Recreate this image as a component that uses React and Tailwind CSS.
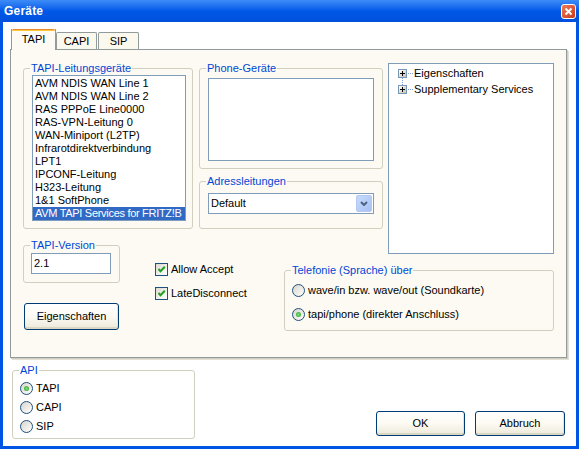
import React from 'react'

const listItems = [
  'AVM NDIS WAN Line 1',
  'AVM NDIS WAN Line 2',
  'RAS PPPoE Line0000',
  'RAS-VPN-Leitung 0',
  'WAN-Miniport (L2TP)',
  'Infrarotdirektverbindung',
  'LPT1',
  'IPCONF-Leitung',
  'H323-Leitung',
  '1&1 SoftPhone',
  'AVM TAPI Services for FRITZ!B',
]

function Group({ label, className = '', legendClass = 'ml-[-1px]', children }) {
  return (
    <fieldset className={`border border-[#D0D0BF] rounded-[3px] ${className}`}>
      <legend className={`px-[1px] leading-[13px] text-[#0046D5] ${legendClass}`}>{label}</legend>
      {children}
    </fieldset>
  )
}

function Radio({ checked, label }) {
  return (
    <div className="flex items-center h-[13px] gap-[3px] leading-[13px]">
      <span className="w-[13px] h-[13px] shrink-0 rounded-full border border-[#1C5180] bg-linear-to-br from-[#D8D5CA] to-white flex items-center justify-center">
        {checked && (
          <span className="w-[5px] h-[5px] rounded-full bg-radial from-[#7CE07A] to-[#1F9E1F]" />
        )}
      </span>
      <span>{label}</span>
    </div>
  )
}

function Check({ label }) {
  return (
    <div className="flex items-center h-[13px] gap-[3px] leading-[13px]">
      <span className="w-[13px] h-[13px] shrink-0 border border-[#1C5180] bg-linear-to-br from-[#DCDAD0] to-white flex items-center justify-center">
        <svg width="9" height="9" viewBox="0 0 9 9">
          <path d="M1.5 4 L3.5 6.2 L7.8 1.8" fill="none" stroke="#21A121" strokeWidth="2" />
        </svg>
      </span>
      <span>{label}</span>
    </div>
  )
}

function XPButton({ children, className = '' }) {
  return (
    <button className={`border border-[#003C74] rounded-[3px] bg-linear-to-b from-white via-[#FCFAF2] to-[#ECE8DA] shadow-[inset_0_-2px_0_#DCD6C4,inset_-1px_0_0_#E6E2D4] text-black leading-none ${className}`}>
      {children}
    </button>
  )
}

function PlusBox() {
  return (
    <span className="w-[9px] h-[9px] shrink-0 border border-[#7898B5] bg-linear-to-br from-white to-[#C6C2B2] flex items-center justify-center">
      <svg width="7" height="7" viewBox="0 0 7 7" shapeRendering="crispEdges">
        <path d="M1 3.5h5M3.5 1v5" stroke="#000" strokeWidth="1" />
      </svg>
    </span>
  )
}

export default function App() {
  return (
    <div className="w-[579px] h-[449px] bg-[#0055E5] flex flex-col font-['Liberation_Sans',Arial,sans-serif] text-[11px] text-black overflow-hidden">
      {/* title bar */}
      <div className="h-[22px] shrink-0 flex items-center pl-[4px] pr-[3px] bg-linear-to-b from-[#3D8CF7] via-[#0058E8] to-[#0050DC]">
        <span className="text-white font-bold text-[12px] tracking-[0.2px]">Geräte</span>
        <div className="ml-auto w-[15px] h-[15px] rounded-[3px] border border-white bg-linear-to-br from-[#F07A55] to-[#C8391A] flex items-center justify-center">
          <svg width="9" height="9" viewBox="0 0 9 9">
            <path d="M1.5 1.5 L7.5 7.5 M7.5 1.5 L1.5 7.5" stroke="#fff" strokeWidth="2" />
          </svg>
        </div>
      </div>

      {/* client */}
      <div className="flex-1 mx-[3px] mb-[3px] bg-white flex flex-col pl-[7px] pt-[7px]">
        {/* tabs */}
        <div className="relative z-10 flex items-end h-[21px] mb-[-1px] ml-[1px]">
          <div className="w-[45px] h-[21px] bg-[#FCFAF2] border-x border-[#919B9C] flex flex-col">
            <div className="h-[3px] bg-[#FFC83C] border-t border-[#E68B2C] rounded-t-[2px]" />
            <div className="flex-1 flex items-center justify-center pb-[3px]">TAPI</div>
          </div>
          <div className="w-[41px] h-[17px] mb-[1px] bg-[#FBF8EE] border border-b-0 border-[#919B9C] rounded-t-[2px] flex items-center justify-center">CAPI</div>
          <div className="w-[41px] h-[17px] mb-[1px] ml-[1px] bg-[#FBF8EE] border border-b-0 border-[#919B9C] rounded-t-[2px] flex items-center justify-center">SIP</div>
        </div>

        {/* tab panel */}
        <div className="w-[557px] h-[309px] shrink-0 bg-[#FCFAF2] border border-[#919B9C] shadow-[1px_1px_0_#D0CEBF,2px_2px_0_#E3E1D6] pl-[12px] pt-[12px]">
          <div className="grid grid-cols-[176px_85px_104px_166px] grid-rows-[167px_25px_77px]">
            {/* TAPI-Leitungsgeräte */}
            <Group label="TAPI-Leitungsgeräte" legendClass="ml-[-2px]" className="col-start-1 row-start-1 w-[170px] h-[167px] pl-[8px]">
              <div className="w-[154px] h-[146px] bg-white border border-[#7F9DB9] pt-[1px] overflow-hidden">
                {listItems.map((item, i) => (
                  <div
                    key={item}
                    className={`h-[13px] leading-[13px] pl-[2px] whitespace-nowrap overflow-hidden ${i === listItems.length - 1 ? 'bg-[#316AC5] text-white tracking-[-0.3px]' : ''}`}
                  >
                    {item}
                  </div>
                ))}
              </div>
            </Group>

            {/* Phone-Geräte + Adressleitungen */}
            <div className="col-start-2 col-span-2 row-start-1 flex flex-col">
              <Group label="Phone-Geräte" legendClass="ml-[-2px]" className="w-[184px] h-[107px] pl-[8px]">
                <div className="mt-[3px] w-[166px] h-[83px] bg-white border border-[#7F9DB9]" />
              </Group>
              <Group label="Adressleitungen" legendClass="ml-[-2px]" className="mt-[6px] w-[184px] h-[54px] pl-[8px]">
                <div className="mt-[5px] w-[166px] h-[21px] bg-white border border-[#7F9DB9] flex items-center pl-[2px] pr-[1px]">
                  <span className="leading-[13px]">Default</span>
                  <span className="ml-auto w-[16px] h-[17px] rounded-[2px] bg-linear-to-br from-[#C7DAFB] to-[#A6C2F3] border border-[#B4C8F0] flex items-center justify-center">
                    <svg width="8" height="5" viewBox="0 0 8 5">
                      <path d="M1 1 L4 4 L7 1" fill="none" stroke="#4D6185" strokeWidth="2" />
                    </svg>
                  </span>
                </div>
              </Group>
            </div>

            {/* tree */}
            <div className="col-start-4 row-start-1 row-span-2 mt-[1px] w-[166px] h-[191px] bg-white border border-[#7F9DB9] pt-[1px] pl-[9px]">
              <div className="relative h-[16px] flex items-center">
                <PlusBox />
                <span className="w-[5px] border-t border-dotted border-[#7C9FD3] mx-[1px]" />
                <span className="leading-[13px]">Eigenschaften</span>
                <span className="absolute left-[4px] top-[12px] h-[8px] border-l border-dotted border-[#7C9FD3]" />
              </div>
              <div className="h-[16px] flex items-center">
                <PlusBox />
                <span className="w-[5px] border-t border-dotted border-[#7C9FD3] mx-[1px]" />
                <span className="leading-[13px]">Supplementary Services</span>
              </div>
            </div>

            {/* lower left */}
            <div className="col-start-1 col-span-2 row-start-2 row-span-2 flex items-start">
              <div className="w-[97px] flex flex-col">
                <Group label="TAPI-Version" className="mt-[10px] w-[97px] h-[44px] pl-[7px]">
                  <div className="mt-[1px] w-[80px] h-[21px] bg-white border border-[#7F9DB9] flex items-center pl-[2px]">
                    <span className="leading-[13px]">2.1</span>
                  </div>
                </Group>
                <XPButton className="mt-[20px] ml-[1px] w-[95px] h-[27px]">Eigenschaften</XPButton>
              </div>
              <div className="ml-[35px] mt-[34px] flex flex-col gap-[11px]">
                <Check label="Allow Accept" />
                <Check label="LateDisconnect" />
              </div>
            </div>

            {/* Telefonie */}
            <Group label="Telefonie (Sprache) über" className="col-start-3 col-span-2 row-start-3 mt-[10px] w-[270px] h-[67px] pl-[7px]">
              <div className="mt-[7px] flex flex-col gap-[11px]">
                <Radio label="wave/in bzw. wave/out (Soundkarte)" />
                <Radio checked label="tapi/phone (direkter Anschluss)" />
              </div>
            </Group>
          </div>
        </div>

        {/* bottom row */}
        <div className="flex items-start mt-[6px]">
          <Group label="API" className="ml-[2px] w-[183px] h-[75px] pl-[7px]">
            <div className="mt-[5px] flex flex-col gap-[6px]">
              <Radio checked label="TAPI" />
              <Radio label="CAPI" />
              <Radio label="SIP" />
            </div>
          </Group>
          <div className="ml-auto mr-[11px] mt-[47px] flex gap-[10px]">
            <XPButton className="w-[89px] h-[25px]">OK</XPButton>
            <XPButton className="w-[90px] h-[25px]">Abbruch</XPButton>
          </div>
        </div>
      </div>
    </div>
  )
}
